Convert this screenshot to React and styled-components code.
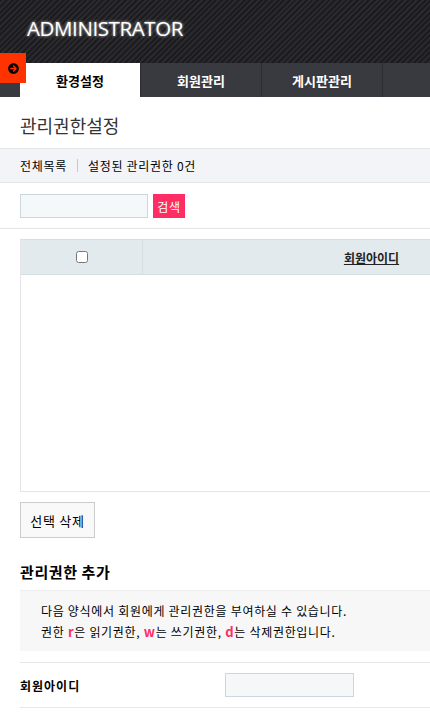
import styled, { createGlobalStyle } from "styled-components";
import { FaArrowCircleRight } from "react-icons/fa";

const GlobalStyle = createGlobalStyle`
  html, body {
    margin: 0;
    padding: 0;
    background: #fff;
    overflow: hidden;
  }
  body {
    font-family: "Noto Sans CJK KR", "Noto Sans", sans-serif;
    color: #000;
    font-size: 12px;
    letter-spacing: 0.7px;
  }
  * { box-sizing: border-box; }
`;

const Page = styled.div`
  position: relative;
  width: 430px;
  overflow: hidden;
`;

const Header = styled.header`
  height: 63px;
  padding-left: 27px;
  display: flex;
  align-items: center;
  background: repeating-linear-gradient(135deg, #1c1c1f 0 2px, #2a2a2e 2px 4px);
`;

const Logo = styled.h1`
  margin: 0 0 8px;
  font-family: "Open Sans", "Liberation Sans", sans-serif;
  font-size: 20.5px;
  font-weight: 400;
  color: #fff;
  letter-spacing: -0.4px;
  text-shadow: 0 0 3px rgba(255, 255, 255, 0.8);
`;

const Toggle = styled.button`
  position: absolute;
  left: 0;
  top: 53px;
  width: 26px;
  height: 30px;
  border: none;
  padding: 0;
  background: #ff3300;
  display: flex;
  align-items: center;
  justify-content: center;
  color: #000;
`;

const Nav = styled.nav`
  height: 34px;
  display: flex;
  padding-left: 20px;
  background: #393a3f;
`;

const Tab = styled.a`
  flex: 0 0 121px;
  display: flex;
  align-items: center;
  justify-content: center;
  font-size: 13px;
  font-weight: 700;
  letter-spacing: 0;
  color: ${(p) => (p.$active ? "#000" : "#fff")};
  background: ${(p) => (p.$active ? "#fff" : "transparent")};
  border-right: 1px solid #2c2d31;
`;

const Title = styled.h2`
  margin: 0;
  padding: 16px 20px 11px;
  font-size: 18px;
  line-height: 24px;
  font-weight: 400;
  letter-spacing: 0;
  color: #333;
`;

const Band = styled.div`
  height: 35px;
  display: flex;
  align-items: center;
  padding-left: 20px;
  background: #f2f4f8;
  border-top: 1px solid #e4e6ea;
  border-bottom: 1px solid #e4e6ea;
  font-size: 12px;
  color: #000;
`;

const Sep = styled.span`
  width: 1px;
  height: 13px;
  margin: 0 10px;
  background: #c8c8c8;
`;

const SearchRow = styled.div`
  display: flex;
  gap: 5px;
  padding: 11px 20px 10px;
  border-bottom: 1px solid #e5e5e5;
`;

const TextInput = styled.input`
  width: ${(p) => p.$w || 128}px;
  height: 24px;
  border: 1px solid #ccd6dc;
  background: #f5f8f9;
  outline: none;
`;

const SearchButton = styled.button`
  height: 24px;
  width: 32px;
  padding: 0;
  border: none;
  background: #ff2d64;
  color: #fff;
  font-family: inherit;
  font-size: 12px;
  letter-spacing: 0.7px;
`;

const TableWrap = styled.div`
  margin: 10px 0 0 20px;
  width: 580px;
  border-left: 1px solid #e5e5e5;
  border-bottom: 1px solid #e5e5e5;
`;

const HeadRow = styled.div`
  height: 36px;
  display: grid;
  grid-template-columns: 121px 1fr;
  background: #e3eaee;
  border-top: 1px solid #d3dde3;
  border-bottom: 1px solid #d3dde3;
`;

const HeadCell = styled.div`
  display: flex;
  align-items: center;
  justify-content: center;
  border-left: ${(p) => (p.$first ? "none" : "1px solid #d3dde3")};
  font-weight: 700;
  font-size: 12px;
  letter-spacing: 0;
  color: #222;
  text-decoration: underline;
`;

const Check = styled.input`
  width: 12px;
  height: 12px;
  margin: 0;
`;

const TableBody = styled.div`
  height: 216px;
  background: #fff;
`;

const DeleteButton = styled.button`
  margin: 10px 0 0 20px;
  width: 75px;
  height: 36px;
  border: 1px solid #ccc;
  background: #f9f9f9;
  font-family: inherit;
  font-size: 13px;
  letter-spacing: 0.7px;
  color: #000;
`;

const SubTitle = styled.h3`
  margin: 24px 20px 8px;
  font-size: 15px;
  line-height: 20px;
  font-weight: 700;
  letter-spacing: 0.6px;
  color: #000;
`;

const InfoBox = styled.div`
  margin-left: 20px;
  padding: 9px 21px;
  background: #f7f7f7;
  border-top: 1px solid #efefef;
  font-size: 12px;
  line-height: 21px;
  color: #000;
`;

const Flag = styled.b`
  color: #ff2d64;
  font-size: 13px;
`;

const FormRow = styled.div`
  margin: 11px 0 0 20px;
  height: 46px;
  display: grid;
  grid-template-columns: 205px 1fr;
  align-items: center;
  border-top: 1px solid #e8e8e8;
  border-bottom: 1px solid #e8e8e8;
`;

const Label = styled.label`
  font-weight: 700;
  font-size: 12px;
  letter-spacing: 1px;
  color: #000;
`;

export default function App() {
  return (
    <Page>
      <GlobalStyle />
      <Header>
        <Logo>ADMINISTRATOR</Logo>
      </Header>
      <Toggle>
        <FaArrowCircleRight size={11} />
      </Toggle>
      <Nav>
        <Tab $active>환경설정</Tab>
        <Tab>회원관리</Tab>
        <Tab>게시판관리</Tab>
        <Tab />
      </Nav>

      <Title>관리권한설정</Title>
      <Band>
        전체목록
        <Sep />
        설정된 관리권한 0건
      </Band>
      <SearchRow>
        <TextInput />
        <SearchButton>검색</SearchButton>
      </SearchRow>

      <TableWrap>
        <HeadRow>
          <HeadCell $first>
            <Check type="checkbox" />
          </HeadCell>
          <HeadCell>회원아이디</HeadCell>
        </HeadRow>
        <TableBody />
      </TableWrap>

      <DeleteButton>선택 삭제</DeleteButton>

      <SubTitle>관리권한 추가</SubTitle>
      <InfoBox>
        다음 양식에서 회원에게 관리권한을 부여하실 수 있습니다.
        <br />
        권한 <Flag>r</Flag>은 읽기권한, <Flag>w</Flag>는 쓰기권한, <Flag>d</Flag>는 삭제권한입니다.
      </InfoBox>
      <FormRow>
        <Label>회원아이디</Label>
        <TextInput $w={129} />
      </FormRow>
    </Page>
  );
}
